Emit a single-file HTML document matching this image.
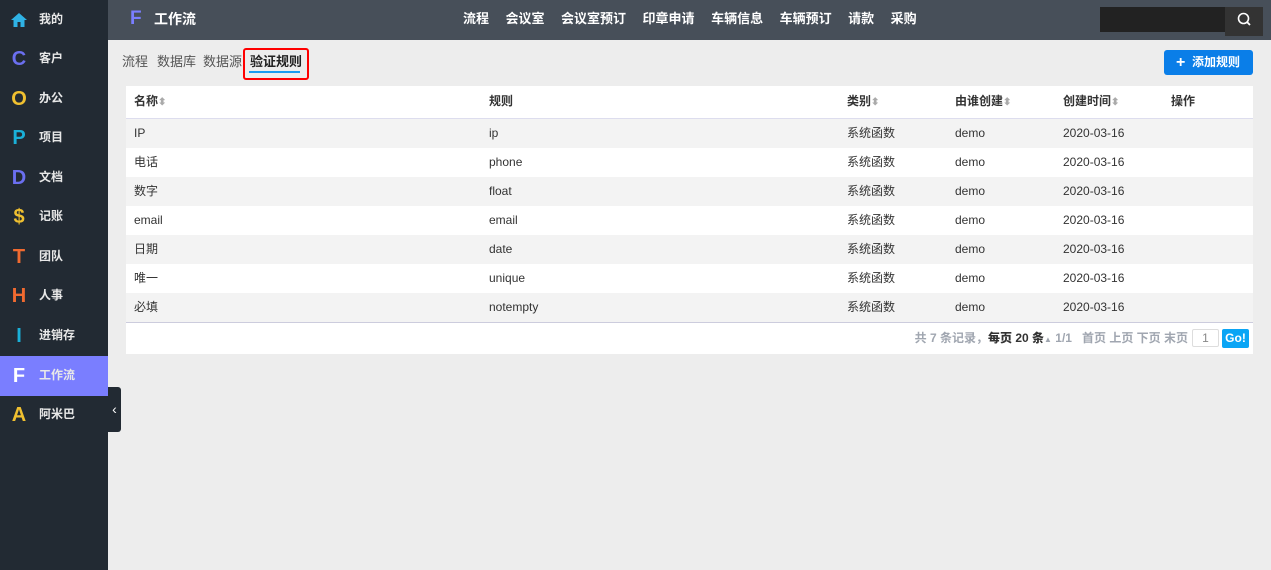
<!DOCTYPE html>
<html><head><meta charset="utf-8"><style>
*{margin:0;padding:0;box-sizing:border-box}
body{width:1271px;height:570px;background:#ededed;font-family:"Liberation Sans","Noto Sans CJK SC",sans-serif;font-size:12px;color:#333;position:relative;overflow:hidden}
.side{position:absolute;left:0;top:0;width:108px;height:570px;background:#222a33}
.it{position:absolute;left:0;width:108px;height:40px;color:#e8e8e8;font-weight:bold;font-size:12px;line-height:40px}
.it .ic{position:absolute;left:9px;top:0;width:20px;text-align:center;font-size:20px;font-weight:bold;line-height:40px}
.it .t{position:absolute;left:39px;top:-1px}
.act{background:#7a7eff}
.top{position:absolute;left:108px;top:0;width:1163px;height:40px;background:#474f59}
.logo{position:absolute;left:22px;top:0;line-height:38px;color:#7a7eff;font-size:19px;font-weight:bold}
.ttl{position:absolute;left:46px;top:0;line-height:38px;color:#fff;font-size:14px;font-weight:bold}
.nav{position:absolute;left:355px;top:0;line-height:38px;color:#fff;font-size:13px;font-weight:bold;white-space:nowrap}
.nav span{margin-right:16.5px}
.srch{position:absolute;left:992px;top:7px;width:126px;height:25px;background:#222}
.sb{position:absolute;left:1117px;top:7px;width:38px;height:29px;background:#333}
.tab{position:absolute;top:54px;font-size:13px;color:#555;line-height:16px;white-space:nowrap}
.red{position:absolute;left:243px;top:48px;width:66px;height:32px;border:2px solid #f00;border-radius:3px}
.ul{position:absolute;left:249px;top:71px;width:51px;height:2px;background:#1a9bf0}
.btn{position:absolute;left:1164px;top:50px;width:89px;height:25px;background:#0a7ee8;border-radius:3px;color:#fff;font-weight:bold;font-size:12px;line-height:25px;padding-left:12px}
.tb{position:absolute;left:126px;top:86px;width:1127px;height:268px;background:#fff}
.row{position:absolute;left:0;width:1127px;height:29px;line-height:29px}
.row span{position:absolute;top:0}
.hd{height:33px;line-height:31px;border-bottom:1px solid #dde;font-weight:bold}
.g{background:#f3f3f3}
.ar{color:#aaa;font-size:10px;font-style:normal}
.ft{position:absolute;left:0;top:236px;width:1127px;height:32px;border-top:1px solid #ccd}
.pg{position:absolute;right:65px;top:0;line-height:30px;color:#a0a6b0;font-weight:bold;white-space:nowrap}
.pg b{color:#333}
.inp{position:absolute;left:1066px;top:6px;width:27px;height:18px;border:1px solid #ddd;border-radius:2px;text-align:center;color:#888;line-height:16px}
.go{position:absolute;left:1096px;top:6px;width:27px;height:19px;background:#0aa5f5;color:#fff;border-radius:2px;font-weight:bold;text-align:center;line-height:19px}
.tog{position:absolute;left:108px;top:387px;width:13px;height:45px;background:#222a33;border-radius:0 3px 3px 0;color:#fff;text-align:center;line-height:45px;font-size:14px}
</style></head><body>
<div class="side">
<div class="it" style="top:0"><span class="ic"><svg width="18" height="18" viewBox="0 0 18 18" style="vertical-align:-3px"><path d="M1 9L9 2l8 7h-2.5v7h-4v-5h-3v5h-4V9z" fill="#2fb2e5"/></svg></span><span class="t">我的</span></div>
<div class="it" style="top:39px"><span class="ic" style="color:#6b6ff0">C</span><span class="t">客户</span></div>
<div class="it" style="top:79px"><span class="ic" style="color:#f0c030">O</span><span class="t">办公</span></div>
<div class="it" style="top:118px"><span class="ic" style="color:#1ab0d8">P</span><span class="t">项目</span></div>
<div class="it" style="top:158px"><span class="ic" style="color:#6b6ff0">D</span><span class="t">文档</span></div>
<div class="it" style="top:197px"><span class="ic" style="color:#f0c030">$</span><span class="t">记账</span></div>
<div class="it" style="top:237px"><span class="ic" style="color:#f06a30">T</span><span class="t">团队</span></div>
<div class="it" style="top:276px"><span class="ic" style="color:#f06a30">H</span><span class="t">人事</span></div>
<div class="it" style="top:316px"><span class="ic" style="color:#1ab0d8">I</span><span class="t">进销存</span></div>
<div class="it act" style="top:356px"><span class="ic" style="color:#fff">F</span><span class="t">工作流</span></div>
<div class="it" style="top:395px"><span class="ic" style="color:#f0c030">A</span><span class="t">阿米巴</span></div>
</div>
<div class="tog">‹</div>
<div class="top">
<div class="logo">F</div><div class="ttl">工作流</div>
<div class="nav"><span>流程</span><span>会议室</span><span>会议室预订</span><span>印章申请</span><span>车辆信息</span><span>车辆预订</span><span>请款</span><span>采购</span></div>
<div class="srch"></div>
<div class="sb"><svg width="38" height="29" viewBox="0 0 38 29"><circle cx="18.5" cy="11.5" r="5" stroke="#fff" stroke-width="1.6" fill="none"/><path d="M22 15l3 3" stroke="#fff" stroke-width="1.8"/></svg></div>
</div>
<div class="tab" style="left:122px">流程</div><div class="tab" style="left:157px">数据库</div><div class="tab" style="left:203px">数据源</div><div class="tab" style="left:250px;color:#222;font-weight:bold">验证规则</div>
<div class="red"></div><div class="ul"></div>
<div class="btn"><span style="font-size:16px;vertical-align:-1px">+</span>&nbsp; 添加规则</div>
<div class="tb">
<div class="row hd" style="top:0"><span style="left:8px">名称<i class="ar">⬍</i></span><span style="left:363px">规则</span><span style="left:721px">类别<i class="ar">⬍</i></span><span style="left:829px">由谁创建<i class="ar">⬍</i></span><span style="left:937px">创建时间<i class="ar">⬍</i></span><span style="left:1045px">操作</span></div>
<div class="row g" style="top:33px"><span style="left:8px">IP</span><span style="left:363px">ip</span><span style="left:721px">系统函数</span><span style="left:829px">demo</span><span style="left:937px">2020-03-16</span></div>
<div class="row" style="top:62px"><span style="left:8px">电话</span><span style="left:363px">phone</span><span style="left:721px">系统函数</span><span style="left:829px">demo</span><span style="left:937px">2020-03-16</span></div>
<div class="row g" style="top:91px"><span style="left:8px">数字</span><span style="left:363px">float</span><span style="left:721px">系统函数</span><span style="left:829px">demo</span><span style="left:937px">2020-03-16</span></div>
<div class="row" style="top:120px"><span style="left:8px">email</span><span style="left:363px">email</span><span style="left:721px">系统函数</span><span style="left:829px">demo</span><span style="left:937px">2020-03-16</span></div>
<div class="row g" style="top:149px"><span style="left:8px">日期</span><span style="left:363px">date</span><span style="left:721px">系统函数</span><span style="left:829px">demo</span><span style="left:937px">2020-03-16</span></div>
<div class="row" style="top:178px"><span style="left:8px">唯一</span><span style="left:363px">unique</span><span style="left:721px">系统函数</span><span style="left:829px">demo</span><span style="left:937px">2020-03-16</span></div>
<div class="row g" style="top:207px"><span style="left:8px">必填</span><span style="left:363px">notempty</span><span style="left:721px">系统函数</span><span style="left:829px">demo</span><span style="left:937px">2020-03-16</span></div>
<div class="ft"><div class="pg">共 7 条记录，<b>每页 20 条</b><span style="font-size:8px">▲</span> 1/1 &nbsp; 首页 上页 下页 末页</div><div class="inp">1</div><div class="go">Go!</div></div>
</div>
</body></html>
